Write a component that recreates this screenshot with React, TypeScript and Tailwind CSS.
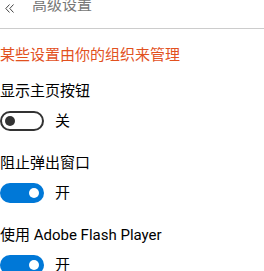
function Toggle({ on, label }: { on: boolean; label: string }) {
  return (
    <div className="flex items-center gap-[11px]">
      {on ? (
        <div className="flex h-[20px] w-[44px] items-center justify-end rounded-full bg-[#0078d7] pr-[5px]">
          <div className="h-[10px] w-[10px] rounded-full bg-white"></div>
        </div>
      ) : (
        <div className="flex h-[20px] w-[44px] items-center rounded-full border-2 border-[#333333] pl-[3px]">
          <div className="h-[10px] w-[10px] rounded-full bg-[#333333]"></div>
        </div>
      )}
      <span className="text-[15px] leading-[15px] text-black">{label}</span>
    </div>
  );
}

function Setting({ title, on }: { title: string; on: boolean }) {
  return (
    <div className="flex flex-col gap-[12px]">
      <div className="text-[15px] leading-[15px] text-black">{title}</div>
      <Toggle on={on} label={on ? "开" : "关"} />
    </div>
  );
}

export default function App() {
  return (
    <div className="h-[271px] w-[264px] overflow-hidden bg-white font-['Roboto','Noto_Sans_CJK_SC',sans-serif]">
      {/* 标题栏 */}
      <div className="flex h-[29px] items-start border-b border-[#cccccc]">
        <svg className="ml-[5px] mt-[4px]" width="9" height="9" viewBox="0 0 9 9" fill="none" stroke="#444444" strokeWidth="1">
          <polyline points="4.5,0.5 0.8,4.5 4.5,8.5" />
          <polyline points="8.5,0.5 4.8,4.5 8.5,8.5" />
        </svg>
        <span className="-mt-[2px] ml-[18px] text-[15px] leading-[15px] text-[#777777]">高级设置</span>
      </div>

      <div className="mt-[19px] text-[15px] leading-[15px] text-[#e2511e]">某些设置由你的组织来管理</div>

      <div className="mt-[21px] flex flex-col gap-[25px]">
        <Setting title="显示主页按钮" on={false} />
        <Setting title="阻止弹出窗口" on={true} />
        <Setting title="使用 Adobe Flash Player" on={true} />
      </div>
    </div>
  );
}
